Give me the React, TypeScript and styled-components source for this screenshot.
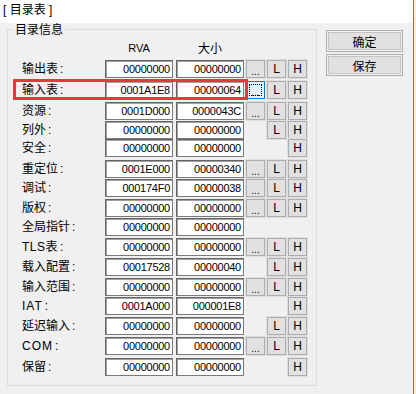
import React from "react";
import styled, { createGlobalStyle } from "styled-components";

const GlobalStyle = createGlobalStyle`
  html, body { margin: 0; padding: 0; background: #f0f0f0; }
  body {
    font-family: "Liberation Sans", "Noto Sans CJK SC", sans-serif;
    color: #000;
  }
`;

const Window = styled.div`
  width: 413px;
  height: 394px;
  border-right: 1px solid #2f8ad8;
  background: #f0f0f0;
  display: flex;
  flex-direction: column;
  overflow: hidden;
`;

const TitleStrip = styled.div`
  height: 23px;
  flex: none;
  background: #ffffff;
  box-sizing: border-box;
  padding: 3px 0 0 3px;
  font-size: 12px;
  line-height: 14px;
  font-family: "Liberation Sans", "Noto Sans CJK SC", sans-serif;
`;

const Content = styled.div`
  display: flex;
  align-items: flex-start;
  padding-left: 7px;
  gap: 9px;
`;

const Group = styled.fieldset`
  margin: 0;
  padding: 0;
  width: 310px;
  height: 363px;
  box-sizing: border-box;
  border: 1px solid #dcdcdc;
  min-width: 0;
`;

const Legend = styled.legend`
  margin-left: 5px;
  padding: 0 2px;
  font-size: 12px;
  line-height: 12px;
  font-family: "Noto Sans CJK SC", sans-serif;
`;

const HeaderRow = styled.div`
  display: grid;
  grid-template-columns: 97px 68px 3px 68px;
  height: 25px;
  align-items: center;
  font-size: 11px;
`;

const HeaderCell = styled.div<{ $col: number }>`
  grid-column: ${(p) => p.$col};
  text-align: center;
  font-family: "Liberation Sans", "Noto Sans CJK SC", sans-serif;
  font-size: ${(p) => (p.$col === 2 ? "11px" : "12px")};
`;

const Row = styled.div<{ $h: number }>`
  position: relative;
  display: grid;
  grid-template-columns: 83px 71px 70px 21px 21px 19px;
  height: ${(p) => p.$h}px;
  padding-left: 14px;
  align-items: start;
`;

const Label = styled.div<{ $spacing: number }>`
  font-size: 12px;
  line-height: 18px;
  letter-spacing: ${(p) => p.$spacing}px;
  font-family: "Liberation Sans", "Noto Sans CJK SC", sans-serif;
  white-space: nowrap;
`;

const Colon = styled.span`
  margin-left: 2px;
  letter-spacing: 0;
`;

const Field = styled.div`
  width: 68px;
  height: 18px;
  box-sizing: border-box;
  background: #fff;
  border: 1px solid #7a7a7a;
  border-top-color: #646464;
  border-left-color: #646464;
  box-shadow: inset 1px 1px 0 #a0a0a0;
  font-size: 11px;
  letter-spacing: -0.25px;
  line-height: 16px;
  text-align: right;
  padding-right: 2px;
  font-family: "Liberation Sans", sans-serif;
`;

const SmallButton = styled.div<{ $col: number; $focused?: boolean }>`
  grid-column: ${(p) => p.$col};
  width: 19px;
  height: 18px;
  box-sizing: border-box;
  background: ${(p) => (p.$focused ? "#e5f1fb" : "#e1e1e1")};
  border: 1px solid ${(p) => (p.$focused ? "#0078d7" : "#adadad")};
  box-shadow: ${(p) => (p.$focused ? "none" : "0 0 0 1px #dedede")};
  display: flex;
  align-items: center;
  justify-content: center;
  font-size: ${(p) => (p.$col === 4 ? "10px" : "12px")};
  line-height: 1;
  font-family: "Liberation Sans", sans-serif;
  position: relative;
`;

const Dots = styled.span`
  margin-top: 5px;
  letter-spacing: 0;
`;

const FocusRing = styled.span`
  position: absolute;
  inset: 2px;
  border: 1px dotted #000;
`;

const Highlight = styled.span`
  position: absolute;
  left: 5px;
  top: -2px;
  width: 235px;
  height: 21px;
  box-sizing: border-box;
  border: 3px solid #e3393c;
  pointer-events: none;
`;

const SideButtons = styled.div`
  display: flex;
  flex-direction: column;
  gap: 2px;
  margin-top: 7px;
`;

const SideButton = styled.div`
  width: 77px;
  height: 22px;
  box-sizing: border-box;
  background: #e1e1e1;
  border: 1px solid #adadad;
  box-shadow: inset 0 0 0 1px #f2f2f2, inset 0 0 0 2px #c4c4c4;
  display: flex;
  align-items: center;
  justify-content: center;
  font-size: 12px;
  font-family: "Noto Sans CJK SC", sans-serif;
`;

type Entry = {
  label: string;
  spacing?: number;
  rva: string;
  size: string;
  btn: string; // combination of D, L, H
  h: number;
};

const rows: Entry[] = [
  { label: "输出表", rva: "00000000", size: "00000000", btn: "DLH", h: 21 },
  { label: "输入表", rva: "0001A1E8", size: "00000064", btn: "DLH", h: 21 },
  { label: "资源", rva: "0001D000", size: "0000043C", btn: "DLH", h: 19 },
  { label: "列外", rva: "00000000", size: "00000000", btn: "LH", h: 18 },
  { label: "安全", rva: "00000000", size: "00000000", btn: "H", h: 21 },
  { label: "重定位", rva: "0001E000", size: "00000340", btn: "DLH", h: 19 },
  { label: "调试", rva: "000174F0", size: "00000038", btn: "DLH", h: 20 },
  { label: "版权", rva: "00000000", size: "00000000", btn: "DLH", h: 19 },
  { label: "全局指针", rva: "00000000", size: "00000000", btn: "", h: 20 },
  { label: "TLS表", spacing: 0.5, rva: "00000000", size: "00000000", btn: "DLH", h: 20 },
  { label: "载入配置", rva: "00017528", size: "00000040", btn: "LH", h: 20 },
  { label: "输入范围", rva: "00000000", size: "00000000", btn: "DLH", h: 19 },
  { label: "IAT", spacing: 1, rva: "0001A000", size: "000001E8", btn: "H", h: 20 },
  { label: "延迟输入", rva: "00000000", size: "00000000", btn: "LH", h: 20 },
  { label: "COM", spacing: 1, rva: "00000000", size: "00000000", btn: "DLH", h: 21 },
  { label: "保留", rva: "00000000", size: "00000000", btn: "H", h: 19 },
];

export default function App() {
  return (
    <>
      <GlobalStyle />
      <Window>
        <TitleStrip>[ 目录表 ]</TitleStrip>
        <Content>
          <Group>
            <Legend>目录信息</Legend>
            <HeaderRow>
              <HeaderCell $col={2}>RVA</HeaderCell>
              <HeaderCell $col={4}>大小</HeaderCell>
            </HeaderRow>
            {rows.map((r, i) => (
              <Row key={r.label} $h={r.h}>
                <Label $spacing={r.spacing ?? 0}>
                  {r.label}
                  <Colon>:</Colon>
                </Label>
                <Field>{r.rva}</Field>
                <Field>{r.size}</Field>
                {r.btn.includes("D") && (
                  <SmallButton $col={4} $focused={i === 1}>
                    <Dots>...</Dots>
                    {i === 1 && <FocusRing />}
                  </SmallButton>
                )}
                {r.btn.includes("L") && <SmallButton $col={5}>L</SmallButton>}
                {r.btn.includes("H") && <SmallButton $col={6}>H</SmallButton>}
                {i === 1 && <Highlight />}
              </Row>
            ))}
          </Group>
          <SideButtons>
            <SideButton>确定</SideButton>
            <SideButton>保存</SideButton>
          </SideButtons>
        </Content>
      </Window>
    </>
  );
}
